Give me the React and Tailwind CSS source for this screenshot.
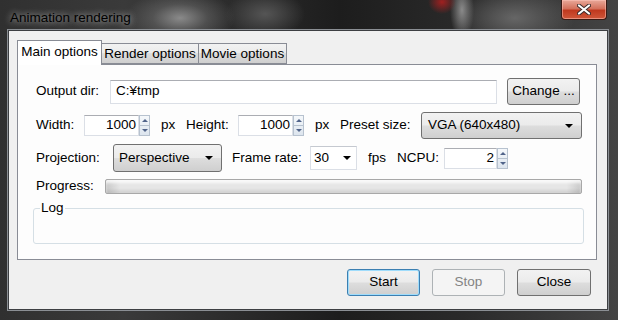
import React from "react";

const FONT = "font-['Liberation_Sans',Arial,sans-serif]";

function Spin() {
  return (
    <div className="flex h-[21px] w-[11px] flex-col border border-[#b7c2cf] bg-[linear-gradient(#f5f8fb,#dde5ee)]">
      <div className="flex flex-1 items-center justify-center border-b border-[#b7c2cf]">
        <div className="h-0 w-0 border-x-[3px] border-b-[3px] border-x-transparent border-b-[#51648a]" />
      </div>
      <div className="flex flex-1 items-center justify-center">
        <div className="h-0 w-0 border-x-[3px] border-t-[3px] border-x-transparent border-t-[#51648a]" />
      </div>
    </div>
  );
}

function DownArrow() {
  return <div className="h-0 w-0 border-x-[4px] border-t-[4px] border-x-transparent border-t-black" />;
}

const btnBg =
  "bg-[linear-gradient(#f2f2f2,#ebebeb_48%,#dddddd_52%,#cfcfcf)]";

export default function App() {
  return (
    <div
      className={`${FONT} flex h-[320px] w-[618px] flex-col overflow-hidden bg-[#161718] bg-[image:radial-gradient(ellipse_55px_28px_at_180px_18px,#8a8a8a_0%,rgba(110,110,110,0.5)_50%,transparent_100%),radial-gradient(ellipse_40px_24px_at_265px_14px,#555_0%,transparent_100%),radial-gradient(ellipse_14px_12px_at_442px_2px,#a02020_0%,transparent_100%),radial-gradient(ellipse_12px_30px_at_462px_10px,#8a8a8a_0%,transparent_100%),radial-gradient(ellipse_60px_30px_at_515px_18px,#666_0%,transparent_100%),linear-gradient(90deg,#303030,#3a3a3a_20%,#1d1d1d_55%,#2a2a2a_75%,#444)] text-[13.5px] text-black`}
    >
      {/* Title bar */}
      <div className="flex h-[30px] shrink-0 items-start">
        <div className="pl-[10px] pt-[10px] text-[13.5px] leading-[16px] text-black [text-shadow:0_0_6px_rgba(255,255,255,0.55),0_0_10px_rgba(255,255,255,0.35)]">
          Animation rendering
        </div>
        <div className="ml-auto mr-[11px] flex h-[20px] w-[46px] items-center justify-center rounded-b-[4px] border border-t-0 border-[#3a1a14] bg-[linear-gradient(#e9a99a,#d4715c_45%,#c0391f_55%,#d0573a)] shadow-[inset_0_0_0_1px_rgba(255,200,190,0.5)]">
          <svg width="14" height="11" viewBox="0 0 14 11">
            <path d="M2 1.5 L12 9.5 M12 1.5 L2 9.5" stroke="#3a2a2a" strokeWidth="4" strokeLinecap="round" />
            <path d="M2 1.5 L12 9.5 M12 1.5 L2 9.5" stroke="#ffffff" strokeWidth="2.2" strokeLinecap="round" />
          </svg>
        </div>
      </div>

      {/* Client area */}
      <div className="ml-[8px] flex h-[280px] w-[600px] flex-col border border-[#3d3f42] bg-[#f0f0f0] shadow-[0_0_0_1px_#8b8f94]">
        <div className="pl-[8px] pt-[9px]">
          {/* Tabs */}
          <div className="flex items-end">
            <div className="relative z-10 -mb-px flex h-[25px] w-[85px] items-start justify-center border border-b-0 border-[#898c95] bg-white pt-[3px] leading-[16px]">
              Main options
            </div>
            <div className="flex h-[21px] w-[97px] items-center justify-center border border-l-0 border-[#898c95] bg-[linear-gradient(#f2f2f2,#ebebeb_50%,#dddddd_50%,#cfcfcf)] leading-[16px]">
              Render options
            </div>
            <div className="flex h-[21px] w-[88px] items-center justify-center border border-l-0 border-[#898c95] bg-[linear-gradient(#f2f2f2,#ebebeb_50%,#dddddd_50%,#cfcfcf)] leading-[16px]">
              Movie options
            </div>
          </div>

          {/* Panel */}
          <div className="flex h-[196px] w-[580px] flex-col border border-[#898c95] bg-[#fdfdfd] pl-[18px] pt-[13px]">
            {/* Row 1 */}
            <div className="flex h-[27px] items-center">
              <div className="w-[74px]">Output dir:</div>
              <div className="flex h-[24px] w-[387px] items-center border border-[#dbdfe6] border-t-[#abadb3] bg-white pl-[5px]">
                C:¥tmp
              </div>
              <div className={`ml-[10px] flex h-[27px] w-[73px] items-center justify-center rounded-[3px] border border-[#707070] ${btnBg}`}>
                Change ...
              </div>
            </div>

            {/* Row 2 */}
            <div className="mt-[7px] flex h-[27px] items-center">
              <div className="w-[48px]">Width:</div>
              <div className="flex h-[21px] w-[55px] items-center justify-end border border-[#dbdfe6] border-t-[#abadb3] bg-white pr-[2px]">
                1000
              </div>
              <Spin />
              <div className="ml-[11px] w-[25px]">px</div>
              <div className="w-[52px]">Height:</div>
              <div className="flex h-[21px] w-[55px] items-center justify-end border border-[#dbdfe6] border-t-[#abadb3] bg-white pr-[2px]">
                1000
              </div>
              <Spin />
              <div className="ml-[11px] w-[25px]">px</div>
              <div className="w-[81px]">Preset size:</div>
              <div className={`flex h-[27px] w-[161px] items-center justify-between rounded-[3px] border border-[#707070] pl-[6px] pr-[8px] ${btnBg}`}>
                <span>VGA (640x480)</span>
                <DownArrow />
              </div>
            </div>

            {/* Row 3 */}
            <div className="mt-[5px] flex h-[28px] items-center">
              <div className="w-[77px]">Projection:</div>
              <div className={`flex h-[28px] w-[109px] items-center justify-between rounded-[3px] border border-[#707070] pl-[5px] pr-[8px] ${btnBg}`}>
                <span>Perspective</span>
                <DownArrow />
              </div>
              <div className="ml-[10px] w-[78px]">Frame rate:</div>
              <div className="flex h-[24px] w-[47px] items-center justify-between border border-[#dbdfe6] border-t-[#c5c9d0] bg-white pl-[3px] pr-[5px]">
                <span>30</span>
                <DownArrow />
              </div>
              <div className="ml-[11px] w-[29px]">fps</div>
              <div className="w-[47px]">NCPU:</div>
              <div className="flex h-[21px] w-[53px] items-center justify-end border border-[#dbdfe6] border-t-[#abadb3] bg-white pr-[2px]">
                2
              </div>
              <Spin />
            </div>

            {/* Row 4 */}
            <div className="mt-[7px] flex h-[15px] items-center">
              <div className="w-[69px]">Progress:</div>
              <div className="h-[15px] w-[477px] rounded-[2px] border border-[#a8a8a8] bg-[linear-gradient(90deg,#c8c8c8,#e6e6e6_3%,#e6e6e6_97%,#c8c8c8)] shadow-[inset_0_3px_3px_rgba(255,255,255,0.8),inset_0_-3px_3px_rgba(0,0,0,0.08)]" />
            </div>

            {/* Log */}
            <fieldset className="mt-[6px] -ml-[3px] h-[44px] w-[551px] rounded-[3px] border border-[#d5dfe5]">
              <legend className="ml-[6px] px-[1px] leading-[16px]">Log</legend>
            </fieldset>
          </div>
        </div>

        {/* Buttons */}
        <div className="mt-[9px] flex justify-end gap-[12px] pr-[16px]">
          <div className={`flex h-[27px] w-[73px] items-center justify-center rounded-[3px] border border-[#3c7fb1] ${btnBg} shadow-[inset_0_0_0_1px_#9fdcfb]`}>
            Start
          </div>
          <div className="flex h-[27px] w-[73px] items-center justify-center rounded-[3px] border border-[#adb2b5] bg-[#f4f4f4] text-[#838383]">
            Stop
          </div>
          <div className={`flex h-[27px] w-[74px] items-center justify-center rounded-[3px] border border-[#707070] ${btnBg}`}>
            Close
          </div>
        </div>
      </div>
    </div>
  );
}
